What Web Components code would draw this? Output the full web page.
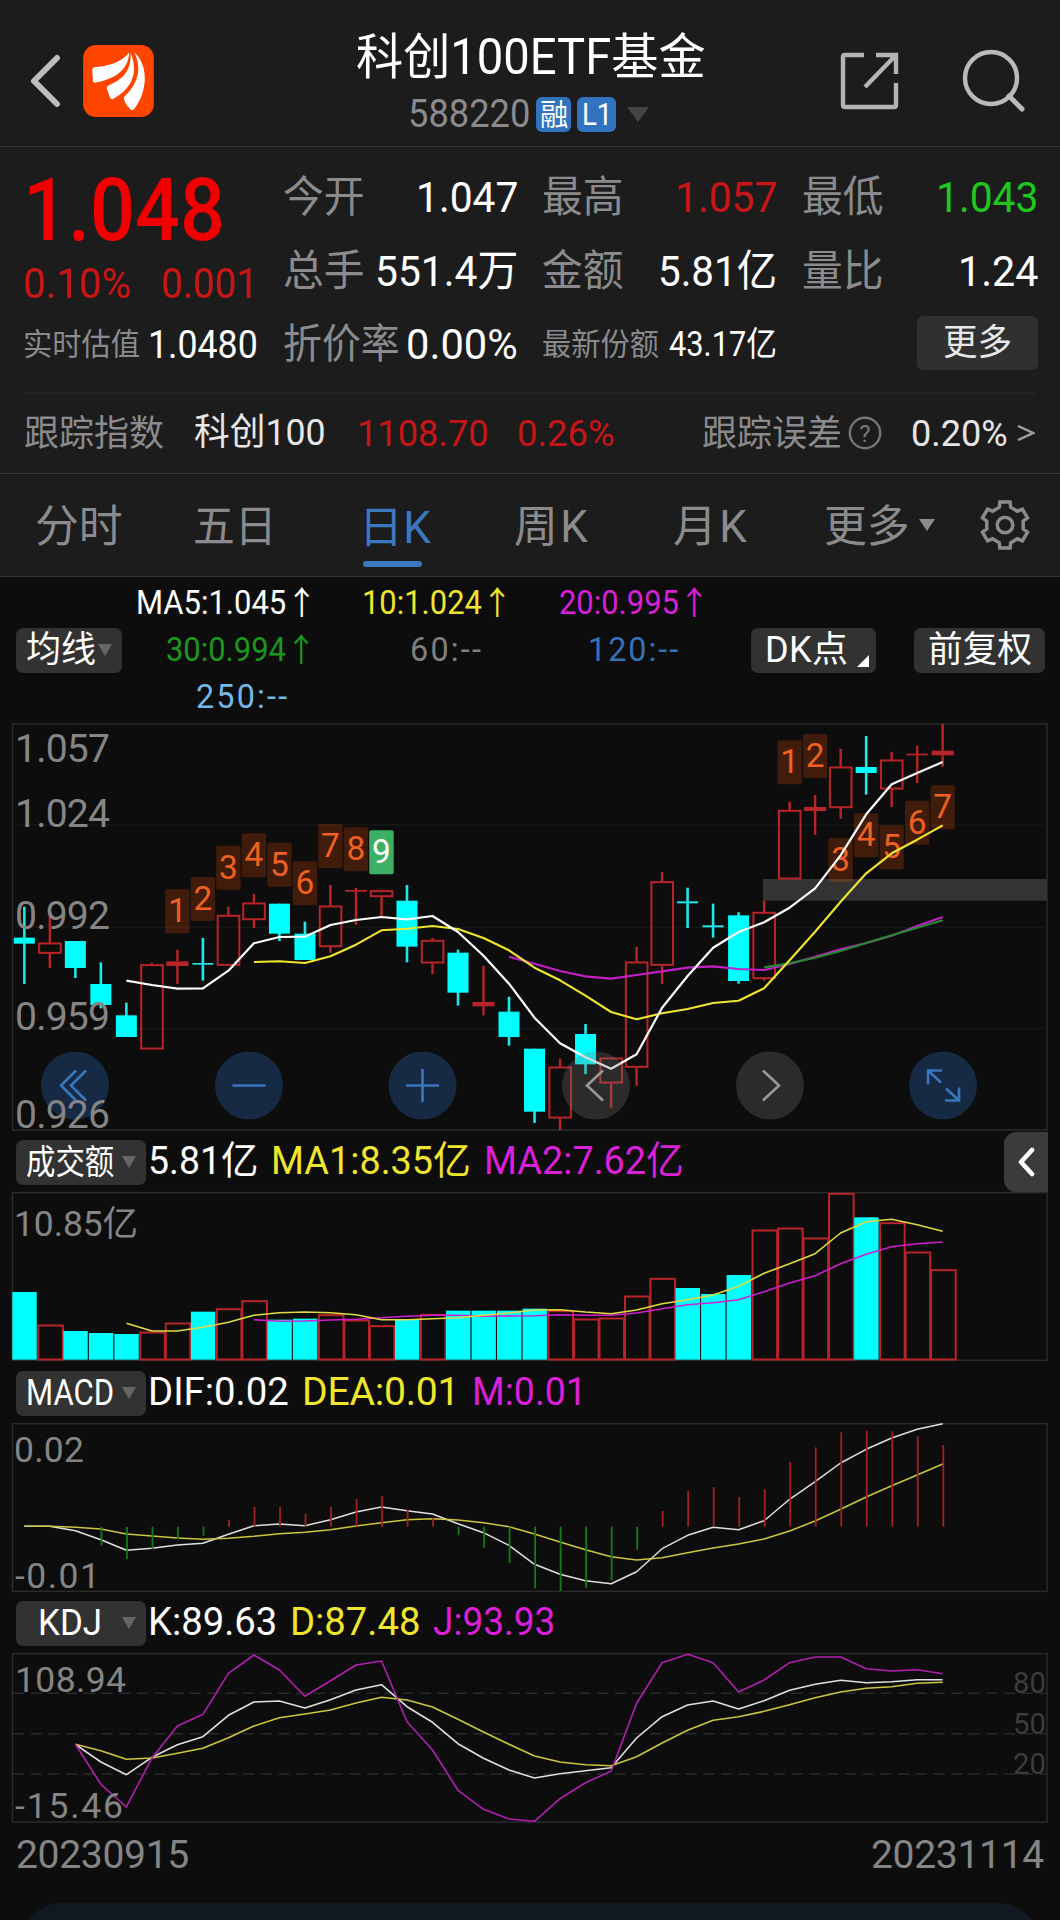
<!DOCTYPE html>
<html lang="zh-CN">
<head>
<meta charset="utf-8">
<title>科创100ETF基金</title>
<style>
  html, body { margin: 0; padding: 0; }
  body {
    width: 1060px;
    height: 1920px;
    overflow: hidden;
    background: #0d0d0d;
    color: #fff;
    font-family: Roboto, "Noto Sans CJK SC", sans-serif;
    font-size-adjust: cap-height 0.742;
    line-height: 1;
  }
</style>
</head>
<body>
<fund-app></fund-app>

<script>
const GRAY = '#8b8b8e';
const RED = '#c81616';
const YELLOW = '#f0e62e';
const PINK = '#dc1fd8';

const t = (text, w, size, color = 'inherit', extra = '') =>
  `<q-text w="${w}" size="${size}" style="color:${color};${extra}">${text}</q-text>`;

class BaseElement extends HTMLElement {
  constructor() {
    super();
    this.root = this.attachShadow({mode: 'open'});
  }

  connectedCallback() {
    this.root.innerHTML = this.render();
  }
}

class FundHeader extends BaseElement {
  render() {
    return `
      <style>
        :host {
          display: grid;
          grid-template-columns: 125px 1fr 61px;
          height: 146px;
          border-bottom: 1px solid #333;
          background: #1c1c1c;
          padding: 0 35px 0 29px;
        }
        svg { display: block; }
        .left, .right { display: flex; align-items: center; padding-top: 16px; }
        .left { gap: 21px; }
        .right { justify-content: flex-end; gap: 63px; }
        .mid { display: flex; flex-direction: column; padding-left: 202px; }
        .title { padding-top: 34px; height: 58px; }
        .code { display: flex; align-items: center; height: 45px; padding-left: 52px; }
        .badge {
          display: flex; align-items: center; justify-content: center;
          height: 35px; border-radius: 6px; background: #3273bf; margin-right: 6px;
        }
      </style>
      <div class="left">
        <svg width="33" height="54" viewBox="0 0 33 54" fill="none" stroke="#bdbdbd" stroke-width="6" stroke-linecap="round" stroke-linejoin="round">
          <path d="M28 4 5 27 28 50"/>
        </svg>
        <svg width="71" height="72" viewBox="0 0 210 214">
          <rect width="210" height="214" rx="38" fill="#ff4500"/>
          <g fill="#fff">
            <path d="M137 22C110 54 75 62 32 66Q26 68 27 76L29 108Q30 113 36 112C88 102 134 78 137 22Z"/>
            <path d="M141 24C144 76 117 104 74 121Q69 124 70 129L80 156Q84 164 91 159C138 134 168 88 141 24Z"/>
            <path d="M151 20C174 42 185 72 183 106C180 148 164 174 150 192Q145 197 140 191C128 178 121 168 121 155C160 118 178 74 151 20Z"/>
          </g>
        </svg>
      </div>
      <div class="mid">
        <div class="title">${t('科创100ETF基金', 350, 47)}</div>
        <div class="code">
          ${t('588220', 122, 36.5, GRAY)}
          <span class="badge" style="width:35px;margin-left:6px">${t('融', 28, 28)}</span>
          <span class="badge" style="width:39px">${t('L1', 30, 30, '#fff')}</span>
          <svg width="22" height="15" style="margin-left:5px"><path d="M0 0H22L11 15Z" fill="#444"/></svg>
        </div>
      </div>
      <div class="right">
        <svg width="59" height="58" viewBox="0 0 59 58" fill="none" stroke="#b4b4b4" stroke-width="4.4" style="flex:none">
          <path d="M24 3H5Q3 3 3 5V53Q3 55 5 55H54Q56 55 56 53V31"/>
          <path d="M36 3H56V22M56 3 25 35"/>
        </svg>
        <svg width="63" height="64" viewBox="0 0 63 64" fill="none" stroke="#bababa" stroke-width="4.4" style="flex:none">
          <circle cx="29" cy="29" r="26"/><path d="M47 47 60 60" stroke-linecap="round" stroke-width="5"/>
        </svg>
      </div>`;
  }
}

class QuoteCell extends BaseElement {
  render() {
    return `
      <style>
        :host { display: flex; align-items: center; justify-content: space-between; min-width: 0; }
      </style>
      <slot name="label"></slot><slot></slot>`;
  }
}

const cell = (label, lw, ls, value, vw, vs, color = '#fff') => `
  <quote-cell>
    <q-text slot="label" w="${lw}" size="${ls}" style="color:${GRAY}">${label}</q-text>
    ${t(value, vw, vs, color)}
  </quote-cell>`;

class QuotePanel extends BaseElement {
  render() {
    return `
      <style>
        :host { display: block; background: #1c1c1c; border-bottom: 1px solid #353535; }
        .grid {
          display: grid;
          grid-template-columns: 235px 235px 235px 236px;
          grid-template-rows: 73.5px 73.5px 73.5px;
          column-gap: 24.5px;
          padding: 14px 21px 10px 23px;
        }
        .price {
          grid-row: span 2;
          display: flex; flex-direction: column;
          padding-top: 8px;
        }
        .change { display: flex; justify-content: space-between; padding-top: 12px; }
        .more { display: flex; justify-content: flex-end; align-items: center; }
        .more span {
          display: flex; align-items: center; justify-content: center;
          width: 121px; height: 54px; border-radius: 6px; background: #303030;
          margin-bottom: 4px;
        }
        .track {
          display: flex; align-items: center;
          height: 79px; margin: 0 24px; border-top: 2px solid #242424; color: #e6e6e6;
        }
      </style>
      <div class="grid">
        <div class="price">
          ${t('1.048', 202, 83, '#f00000', 'font-weight:500')}
          <div class="change">${t('0.10%', 108, 40, RED)}${t('0.001', 97, 40, RED)}</div>
        </div>
        ${cell('今开', 82, 41, '1.047', 102, 41)}
        ${cell('最高', 82, 41, '1.057', 102, 41, RED)}
        ${cell('最低', 82, 41, '1.043', 102, 41, '#1ec81e')}
        ${cell('总手', 82, 41, '551.4万', 143, 41)}
        ${cell('金额', 82, 41, '5.81亿', 119, 41)}
        ${cell('量比', 82, 41, '1.24', 80, 41)}
        ${cell('实时估值', 117, 29, '1.0480', 110, 37)}
        ${cell('折价率', 117, 39.5, '0.00%', 112, 41)}
        ${cell('最新份额', 117, 29, '43.17亿', 108, 33)}
        <div class="more"><span>${t('更多', 69, 35, '#e8e8e8')}</span></div>
      </div>
      <div class="track">
        ${t('跟踪指数', 140, 35, GRAY)}
        ${t('科创100', 132, 35.5, 'inherit', 'margin-left:30px')}
        ${t('1108.70', 132, 36, RED, 'margin-left:31px')}
        ${t('0.26%', 98, 36, RED, 'margin-left:28px')}
        ${t('跟踪误差', 140, 35, GRAY, 'margin-left:87px')}
        <svg width="34" height="34" viewBox="0 0 34 34" style="margin-left:6px">
          <circle cx="17" cy="17" r="15.2" fill="none" stroke="#77777a" stroke-width="2.4"/>
          <text x="17" y="25.5" text-anchor="middle" font-size="23" fill="#77777a">?</text>
        </svg>
        ${t('0.20%', 97, 36, 'inherit', 'margin-left:29px')}
        <svg width="18" height="16" viewBox="0 0 18 16" style="margin-left:9px">
          <path d="M1 1 16 8 1 15" fill="none" stroke="#a0a0a0" stroke-width="2.4"/>
        </svg>
      </div>`;
  }
}

class PeriodTabs extends BaseElement {
  gear() {
    const pts = [];
    for (let i = 0; i < 6; i++) {
      for (const [d, r] of [[-18, 18.6], [-12.5, 23.6], [12.5, 23.6], [18, 18.6]]) {
        const a = (i * 60 + d - 90) * Math.PI / 180;
        pts.push(`${(26 + r * Math.cos(a)).toFixed(1)} ${(26 + r * Math.sin(a)).toFixed(1)}`);
      }
    }
    return `<polygon points="${pts.join(' ')}"/><circle cx="26" cy="26" r="7.8"/>`;
  }

  render() {
    const tab = (text, w, left) => t(text, w, 42, 'inherit', `margin:4px 0 0 ${left}px`);
    return `
      <style>
        :host {
          display: flex; align-items: center; box-sizing: border-box;
          height: 103px; border-bottom: 1px solid #363636;
          background: #1c1c1c; color: ${GRAY};
        }
        .active {
          display: flex; flex-direction: column; align-items: flex-start;
          margin-left: 82px; color: #3b78be; padding-top: 25px;
        }
        .active::after {
          content: ''; width: 59px; height: 6px; border-radius: 3px;
          background: #3b78be; margin: 12px 0 0 4px;
        }
      </style>
      ${tab('分时', 88, 35)}
      ${tab('五日', 84, 70)}
      <span class="active">${t('日K', 72, 42)}</span>
      ${tab('周K', 76, 83)}
      ${tab('月K', 76, 83)}
      ${tab('更多', 86, 75)}
      <svg width="16" height="12" style="margin-left:9px"><path d="M0 0H16L8 12Z" fill="#8b8b8e"/></svg>
      <svg width="52" height="52" viewBox="0 0 52 52" style="margin-left:44px" fill="none" stroke="#8b8b8e" stroke-width="3.5">${this.gear()}</svg>`;
  }
}

class TagButton extends BaseElement {
  render() {
    const arrow = this.hasAttribute('arrow')
      ? '<svg width="14" height="12"><path d="M0 0H14L7 12Z" fill="#666"/></svg>' : '';
    const corner = this.hasAttribute('corner')
      ? '<svg width="12" height="12" class="corner"><path d="M12 0V12H0Z" fill="#fff"/></svg>' : '';
    return `
      <style>
        :host {
          display: flex; align-items: center; box-sizing: border-box; flex: none;
          height: 45px; border-radius: 7px; background: #323232;
          padding: 0 10px; justify-content: space-between; color: #fff;
        }
        .corner { align-self: flex-end; margin: 0 -3px 6px 0; }
      </style>
      <slot></slot>${arrow}${corner}`;
  }
}

class MaLegend extends BaseElement {
  render() {
    return `
      <style>
        :host {
          display: grid;
          grid-template-columns: 108px 1fr 163px 131px;
          height: 138px; padding: 0 15px 0 16px; box-sizing: border-box;
        }
        tag-button { margin-top: 51px; }
        .values { display: grid; grid-template-columns: 193px 196px 197px; grid-template-rows: 47px 47px 47px; align-items: center; padding-top: 3px; }
        .values q-text { justify-self: end; }
      </style>
      <tag-button arrow style="width:106px">${t('均线', 70, 34.5)}</tag-button>
      <div class="values">
        ${t('MA5:1.045↑', 181, 31)}
        ${t('10:1.024↑', 151, 31, YELLOW)}
        ${t('20:0.995↑', 151, 31, PINK)}
        ${t('30:0.994↑', 151, 31, '#1d961d')}
        ${t('60:--', 73, 31, '#808080', 'margin-right:30px')}
        ${t('120:--', 92, 31, '#3572b5', 'margin-right:30px')}
        ${t('250:--', 93, 31, '#72b8e8', 'margin-right:28px')}
      </div>
      <tag-button corner style="width:125px;padding-left:14px">${t('DK点', 83, 34.5)}</tag-button>
      <tag-button style="width:131px;justify-content:center">${t('前复权', 104, 34.5)}</tag-button>`;
  }
}

class IndicatorHead extends BaseElement {
  render() {
    return `
      <style>
        :host {
          position: relative; z-index: 1;
          display: flex; align-items: center; box-sizing: border-box;
          height: 53px; padding: 8px 0 0 16px; gap: 13px;
        }
        tag-button { width: 130px; margin-right: -11px; }
      </style>
      <tag-button arrow><slot name="name"></slot></tag-button>
      <slot></slot>`;
  }
}

class SideToggle extends BaseElement {
  render() {
    return `
      <style>
        :host {
          position: absolute; right: 12px; top: 0;
          width: 44px; height: 60px; border-radius: 12px 0 0 12px;
          background: #3b3b3b;
          display: flex; align-items: center; justify-content: center;
        }
      </style>
      <svg width="18" height="30" viewBox="0 0 18 30"><path d="M15 3 4 15 15 27" fill="none" stroke="#fff" stroke-width="4.6" stroke-linecap="round" stroke-linejoin="round"/></svg>`;
  }
}

// Series are stored in a 3136-wide grid with three units to a pixel vertically.
const px = i => (72 + 75.47 * i) / 2.9585;
const py = v => v / 3;

const line = (from, values, color, width = 1.8) =>
  `<polyline fill="none" stroke="${color}" stroke-width="${width}" stroke-linejoin="round" points="${
    values.map((v, i) => `${px(from + i).toFixed(1)},${py(v).toFixed(1)}`).join(' ')}"/>`;

const label = (text, x, y, w, size, color = '#858585') =>
  `<text x="${x}" y="${y}" textLength="${w}" font-size="${size}" fill="${color}">${text}</text>`;

const UP = '#b82428';
const DOWN = '#00ffff';

// direction, high, body top, body bottom, low
const CANDLES = [
  ['d', 575, 668, 686, 807], ['u', 590, 683, 716, 759], ['d', 678, 678, 759, 789],
  ['d', 742, 807, 870, 880], ['d', 863, 901, 966, 966], ['u', 743, 748, 1003, 1003],
  ['u', 704, 739, 753, 807], ['d', 669, 744, 749, 797], ['u', 575, 600, 752, 752],
  ['u', 537, 563, 615, 639], ['d', 566, 566, 656, 678], ['d', 620, 656, 735, 735],
  ['u', 510, 572, 696, 713], ['u', 519, 525, 530, 629], ['u', 524, 526, 546, 605],
  ['d', 510, 557, 695, 742], ['u', 669, 675, 745, 777], ['d', 704, 713, 833, 872],
  ['u', 752, 861, 874, 901], ['d', 845, 890, 966, 992], ['d', 1001, 1001, 1190, 1224],
  ['u', 1031, 1055, 1210, 1245], ['d', 927, 957, 1048, 1077], ['u', 1028, 1028, 1105, 1178],
  ['u', 695, 740, 1058, 1112], ['u', 471, 499, 752, 807], ['d', 518, 559, 565, 639],
  ['d', 566, 631, 637, 668], ['d', 592, 601, 798, 806], ['u', 557, 591, 792, 797],
  ['u', 260, 285, 493, 493], ['u', 240, 276, 288, 359], ['u', 101, 155, 279, 311],
  ['d', 63, 156, 174, 239], ['u', 110, 134, 223, 276], ['u', 92, 116, 121, 204],
  ['u', 27, 107, 121, 155]
];

class ChartBase extends BaseElement {
  chart(viewTop, height, top, bottom, body) {
    return `
      <style>
        :host { display: block; }
        svg { display: block; overflow: visible; }
      </style>
      <svg width="1060" height="${height}" viewBox="0 ${viewTop} 1060 ${height}">
        <rect x="12.5" y="${py(top)}" width="1034.5" height="${py(bottom - top)}" fill="none" stroke="#2a2a2a" stroke-width="1.6"/>
        ${body}
      </svg>`;
  }
}

class PriceChart extends ChartBase {
  candle([dir, high, top, bottom, low], i) {
    const x = px(i);
    const h = bottom - top;
    if (dir === 'd') {
      return `<path d="M${x} ${py(high)}V${py(low)}" stroke="#1fe8e8" stroke-width="2.6"/>
        <rect x="${x - 10.5}" y="${py(top)}" width="21" height="${py(h)}" fill="${h < 8 ? '#1fe8e8' : DOWN}"/>`;
    }
    const wicks = `<path d="M${x} ${py(high)}V${py(top)}M${x} ${py(bottom)}V${py(low)}" stroke="${UP}" stroke-width="2.4"/>`;
    if (h < 16) {
      return `${wicks}<rect x="${x - 11}" y="${py(top)}" width="22" height="${py(h)}" fill="${UP}"/>`;
    }
    return `${wicks}<rect x="${x - 10.7}" y="${py(top) + 0.8}" width="21.6" height="${py(h) - 1.6}" fill="none" stroke="${UP}" stroke-width="2"/>`;
  }

  mark([i, top, n]) {
    const nine = n === 9;
    return `<rect x="${px(i) - 12.2}" y="${py(top)}" width="24.4" height="44" rx="2" fill="${nine ? '#3cb064' : '#f24c00'}" fill-opacity="${nine ? 1 : 0.23}"/>
      <text x="${px(i)}" y="${py(top) + 33}" text-anchor="middle" font-size="32" fill="${nine ? '#fff' : '#f06020'}">${n}</text>`;
  }

  button(x, icon, blue) {
    return `<g transform="translate(${x} 370.5)" fill="none" stroke="${blue ? '#3a76bf' : '#999'}" stroke-width="2.6">
      <circle r="34" stroke="none" fill="${blue ? '#1d4068' : '#7a7a7a'}" fill-opacity="${blue ? 0.6 : 0.28}"/>
      <path d="${icon}"/></g>`;
  }

  render() {
    const marks = [
      [6, 523, 1], [7, 486, 2], [8, 392, 3], [9, 355, 4], [10, 383, 5], [11, 439, 6],
      [12, 327, 7], [13, 337, 8], [14, 346, 9],
      [30, 76, 1], [31, 57, 2], [32, 369, 3], [33, 295, 4], [34, 331, 5], [35, 257, 6], [36, 211, 7]
    ];
    return this.chart(0, 417, 27, 1245, `
      <path d="M13 110H1047M13 212.3H1047M13 313.7H1047" stroke="#171717" stroke-width="1.5"/>
      <rect x="763" y="164" width="284" height="21.7" fill="#333"/>
      ${CANDLES.map((c, i) => this.candle(c, i)).join('')}
      ${marks.map(m => this.mark(m)).join('')}
      ${line(19, [725, 746, 768, 784, 791, 780, 769, 758, 754, 762, 765, 747, 725, 703, 684, 662, 633, 606], '#c41fc4', 2.2)}
      ${line(29, [757, 745, 728, 708, 684, 661, 638, 616], '#238a30', 2.2)}
      ${line(9, [741, 739, 744, 724, 689, 646, 641, 633, 642, 669, 706, 758, 796, 842, 891, 913, 895, 882, 864, 857, 820, 736, 650, 560, 475, 415, 374, 331], '#f0e62e', 2.1)}
      ${line(4, [797, 810, 821, 820, 767, 685, 666, 665, 630, 615, 606, 613, 603, 651, 722, 806, 908, 985, 1027, 1061, 1018, 878, 783, 698, 651, 622, 578, 520, 421, 298, 208, 174, 141], '#fff', 2.2)}
      ${this.button(75, 'M1 -15 -14 0 1 15M11 -15 -4 0 11 15', true)}
      ${this.button(249, 'M-16.5 0H16.5', true)}
      ${this.button(422.5, 'M-16.5 0H16.5M0 -16.5V16.5', true)}
      ${this.button(596, 'M7 -15 -9 0 7 15', false)}
      ${this.button(770, 'M-7 -15 9 0 -7 15', false)}
      ${this.button(943, 'M-1 -15H-15V-1M-15 -15 -2 -3M16 2V15H2M16 15 3 3', true)}
      ${label('1.057', 15, 47, 95, 37.5)}
      ${label('1.024', 15, 111.5, 95, 37.5)}
      ${label('0.992', 15, 213.5, 95, 37.5)}
      ${label('0.959', 15, 314.5, 95, 37.5)}
      ${label('0.926', 15, 413, 95, 37.5)}`);
  }
}

class VolumeChart extends ChartBase {
  render() {
    const tops = [
      321, 420, 438, 444, 447, 441, 414, 380, 371, 347, 404, 401, 389, 405, 422, 404, 388, 377, 377,
      377, 371, 377, 402, 399, 333, 280, 309, 327, 270, 135, 129, 159, 25, 97, 113, 201, 254
    ];
    // coloured against the previous close, so it can differ from the candle
    const falling = [0, 2, 3, 4, 7, 10, 11, 15, 17, 18, 19, 20, 26, 27, 28, 33];
    const bars = tops.map((top, i) => {
      const x = px(i);
      return falling.includes(i)
        ? `<rect x="${x - 12}" y="${py(top)}" width="24.4" height="${py(524 - top)}" fill="${DOWN}"/>`
        : `<rect x="${x - 11.6}" y="${py(top) + 0.5}" width="24.6" height="${py(524 - top) - 0.7}" fill="none" stroke="${UP}" stroke-width="2"/>`;
    }).join('');
    return this.chart(0, 178, 23, 526, `
      ${bars}
      ${line(9, [404, 409, 408, 405, 403, 398, 394, 391, 391, 394, 393, 392, 389, 391, 391, 384, 371, 359, 353, 344, 320, 294, 272, 236, 208, 185, 176, 171], '#d01ed0', 1.6)}
      ${line(4, [415, 438, 438, 427, 412, 391, 383, 381, 383, 389, 404, 404, 401, 398, 391, 384, 375, 374, 381, 386, 375, 356, 344, 330, 304, 265, 236, 206, 144, 110, 103, 119, 139], '#e0dc40', 1.6)}
      ${label('10.85亿', 14, 51, 124, 34)}`);
  }
}

class MacdChart extends ChartBase {
  render() {
    const hist = [
      1082, 1122, 1093, 1063, 1052, 1005, 966, 966, 986, 966, 942, 934, 975, 1000, 1049, 1088, 1134,
      1210, 1218, 1208, 1186, 1095, 978, 918, 906, 936, 913, 831, 787, 742, 737, 739, 754, 780
    ];
    const bars = hist.map((v, i) =>
      `<path d="M${px(i + 3) + 0.6} ${py(1025)}V${py(v)}" stroke="${v < 1025 ? '#a02222' : '#167a16'}" stroke-width="1.8"/>`).join('');
    return this.chart(231, 177, 716, 1219, `
      ${line(0, [1024, 1024, 1037, 1064, 1096, 1090, 1080, 1075, 1048, 1022, 1017, 1022, 1004, 981, 966, 977, 987, 1016, 1043, 1081, 1138, 1168, 1187, 1196, 1160, 1091, 1051, 1027, 1034, 1007, 943, 890, 834, 793, 759, 733, 716], '#e0e0e0', 1.5)}
      ${line(0, [1024, 1024, 1027, 1032, 1047, 1053, 1059, 1063, 1060, 1054, 1046, 1042, 1034, 1023, 1013, 1004, 1001, 1005, 1013, 1025, 1047, 1071, 1094, 1115, 1125, 1118, 1103, 1089, 1077, 1062, 1038, 1008, 973, 936, 902, 870, 837], '#ccc63c', 1.5)}
      ${bars}
      ${label('0.02', 14, 276.5, 70, 34)}
      ${label('-0.01', 15, 402.5, 85, 34)}`);
  }
}

class KdjChart extends ChartBase {
  render() {
    return this.chart(46, 177, 161, 666, `
      <path d="M13 93.3H1047M13 133.7H1047M13 174H1047" stroke="#2a2a2a" stroke-width="1.5" stroke-dasharray="11 6.7"/>
      ${line(2, [433, 486, 524, 472, 434, 410, 346, 306, 303, 324, 299, 270, 254, 320, 367, 431, 475, 510, 534, 521, 512, 503, 414, 350, 315, 303, 327, 302, 271, 253, 241, 248, 245, 239, 239], '#e0e0e0', 1.6)}
      ${line(2, [433, 452, 478, 474, 460, 445, 413, 378, 353, 342, 330, 309, 292, 300, 321, 358, 396, 433, 468, 486, 494, 497, 470, 429, 391, 361, 350, 334, 314, 293, 276, 265, 260, 250, 247], '#ccc63c', 1.6)}
      ${line(2, [433, 553, 621, 474, 378, 343, 220, 165, 210, 289, 242, 195, 183, 365, 450, 571, 628, 657, 664, 596, 548, 514, 310, 188, 163, 188, 276, 240, 188, 171, 171, 206, 213, 209, 221], '#b020b0', 1.6)}
      ${label('108.94', 15, 92.3, 111, 34)}
      ${label('-15.46', 15, 218, 108, 34)}
      ${label('80', 1013, 93.3, 33, 28, '#3c3c3c')}
      ${label('50', 1013, 133.5, 33, 28, '#3c3c3c')}
      ${label('20', 1013, 174, 33, 28, '#3c3c3c')}`);
  }
}

class FundApp extends BaseElement {
  render() {
    return `
      <style>
        :host { display: flex; flex-direction: column; height: 1920px; overflow: hidden; }
        fund-header, quote-panel, period-tabs, ma-legend, price-chart,
        indicator-head, volume-chart, macd-chart, kdj-chart { flex: none; }
        .dates {
          display: flex; justify-content: space-between; align-items: center; flex: none;
          height: 66px; padding: 0 16px; color: #858585;
        }
        .bar { height: 80px; margin: 14px 21px 0; border-radius: 42px; background: #111820; flex: none; }
      </style>
      <fund-header></fund-header>
      <quote-panel></quote-panel>
      <period-tabs></period-tabs>
      <ma-legend></ma-legend>
      <price-chart></price-chart>
      <indicator-head>
        <q-text slot="name" w="88" size="33">成交额</q-text>
        ${t('5.81亿', 110, 37.5)}${t('MA1:8.35亿', 200, 37.5, YELLOW)}${t('MA2:7.62亿', 200, 37.5, PINK)}
        <side-toggle></side-toggle>
      </indicator-head>
      <volume-chart></volume-chart>
      <indicator-head>
        <q-text slot="name" w="88" size="34.5">MACD</q-text>
        ${t('DIF:0.02', 141, 37.5)}${t('DEA:0.01', 157, 37.5, YELLOW)}${t('M:0.01', 115, 37.5, PINK)}
      </indicator-head>
      <macd-chart></macd-chart>
      <indicator-head>
        <q-text slot="name" w="64" size="34.5" style="margin-left:12px">KDJ</q-text>
        ${t('K:89.63', 129, 37.5)}${t('D:87.48', 130, 37.5, YELLOW)}${t('J:93.93', 122, 37.5, PINK)}
      </indicator-head>
      <kdj-chart></kdj-chart>
      <div class="dates">${t('20230915', 173, 37.5)}${t('20231114', 173, 37.5)}</div>
      <div class="bar"></div>`;
  }
}

// One line of text spread, or squeezed, to the width given in w.
class QText extends HTMLElement {
  constructor() {
    super();
    this.root = this.attachShadow({mode: 'open'});
    this.root.innerHTML = `
      <style>
        :host { display: block; flex: none; white-space: nowrap; text-align: left; }
        span { display: inline-block; transform-origin: 0 50%; }
      </style>
      <span><slot></slot></span>`;
  }

  connectedCallback() {
    const w = parseFloat(this.getAttribute('w'));
    const span = this.root.querySelector('span');
    this.style.width = `${w}px`;
    this.style.fontSize = `${this.getAttribute('size')}px`;
    const natural = span.offsetWidth;
    if (!natural) return;
    if (natural > w * 1.02) {
      span.style.transform = `scaleX(${w / natural})`;
    } else {
      span.style.letterSpacing = `${(w - natural) / this.textContent.length}px`;
    }
  }
}

customElements.define('side-toggle', SideToggle);
customElements.define('tag-button', TagButton);
customElements.define('quote-cell', QuoteCell);
customElements.define('fund-header', FundHeader);
customElements.define('quote-panel', QuotePanel);
customElements.define('period-tabs', PeriodTabs);
customElements.define('ma-legend', MaLegend);
customElements.define('indicator-head', IndicatorHead);
customElements.define('price-chart', PriceChart);
customElements.define('volume-chart', VolumeChart);
customElements.define('macd-chart', MacdChart);
customElements.define('kdj-chart', KdjChart);
customElements.define('fund-app', FundApp);

// q-text comes last, so its parents are laid out before it measures itself
customElements.define('q-text', QText);
</script>
</body>
</html>
